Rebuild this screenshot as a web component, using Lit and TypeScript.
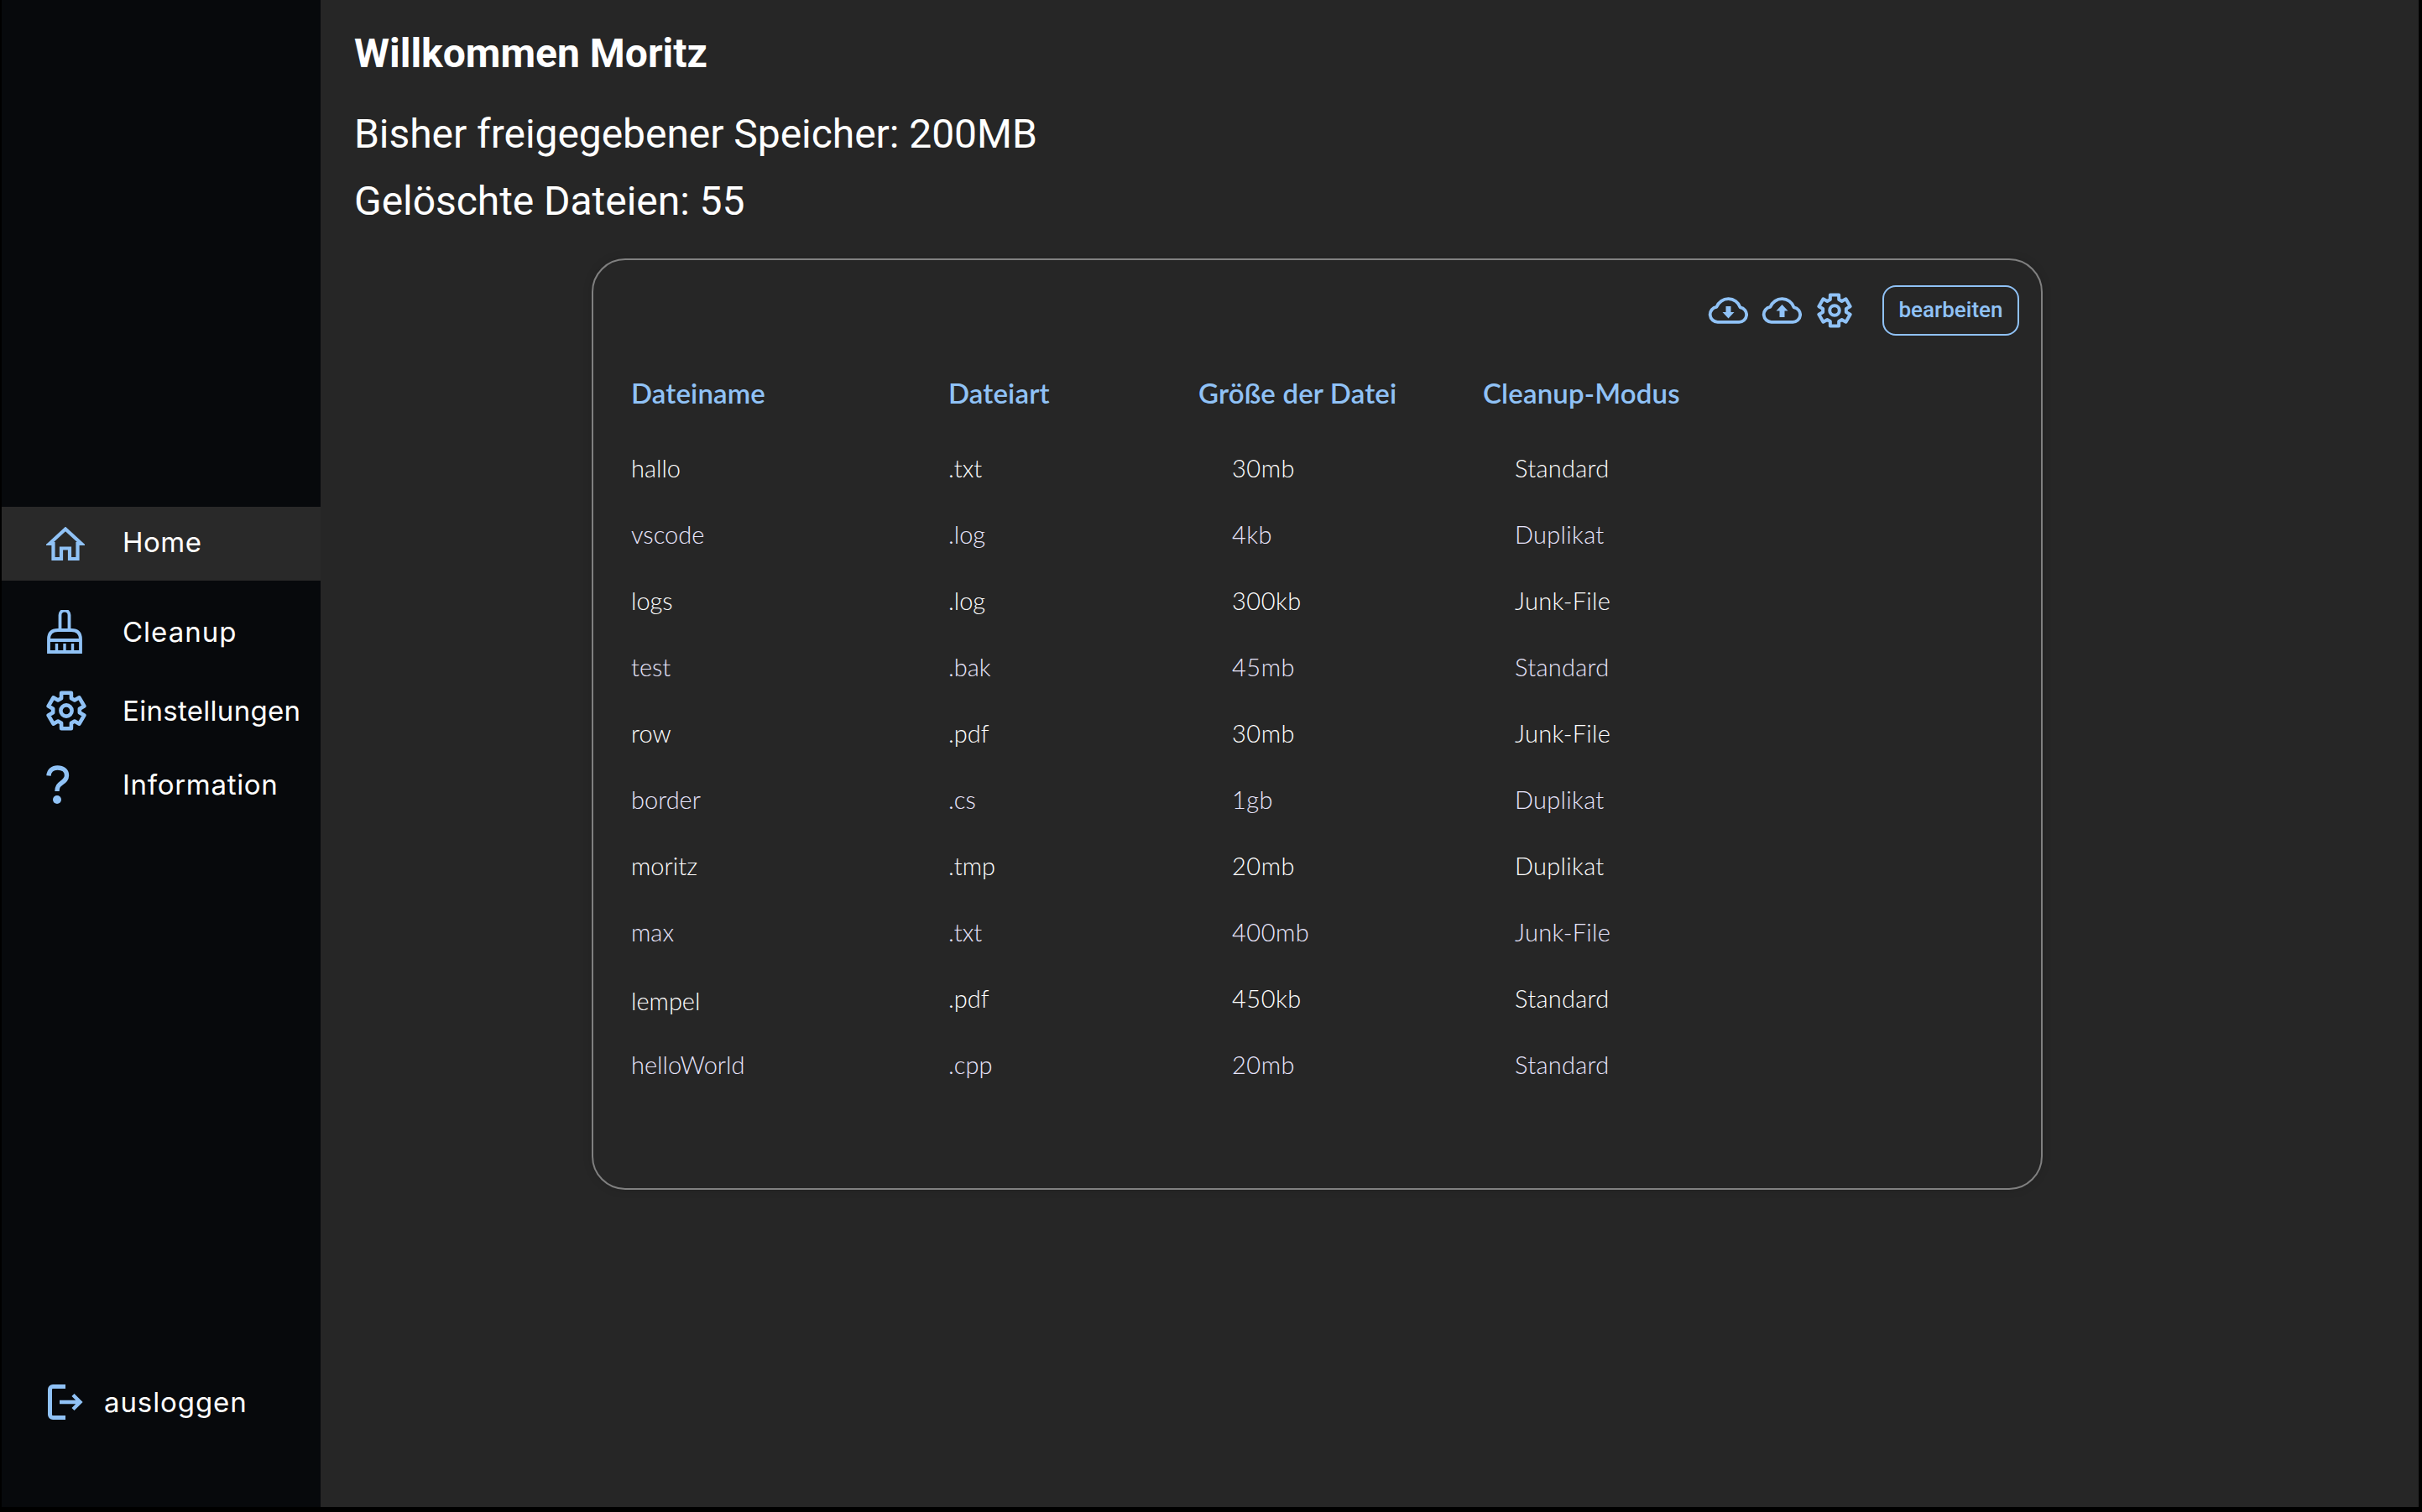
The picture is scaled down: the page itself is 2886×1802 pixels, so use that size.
import { LitElement, html, css, svg } from "lit";
import { customElement } from "lit/decorators.js";

function gearPath(cx: number, cy: number, outer: number, inner: number): string {
  const pts: string[] = [];
  const teeth = 6;
  for (let i = 0; i < teeth; i++) {
    const a = (-90 + (i * 360) / teeth) * (Math.PI / 180);
    const s = 0.27;
    const s2 = 0.38;
    const p = (r: number, t: number) =>
      `${(cx + r * Math.cos(a + t)).toFixed(2)} ${(cy + r * Math.sin(a + t)).toFixed(2)}`;
    pts.push(p(inner, -s2), p(outer, -s), p(outer, s), p(inner, s2));
  }
  return "M" + pts.join(" L") + " Z";
}

const gear = (size: number) => html`<svg class="ic" width=${size} height=${size} viewBox="0 0 48 48">
  <path d=${gearPath(24, 24, 22, 16)} fill="none" stroke="currentColor" stroke-width="4.6" stroke-linejoin="round"></path>
  <circle cx="24" cy="24" r="6.6" fill="none" stroke="currentColor" stroke-width="4.6"></circle>
</svg>`;

const home = html`<svg class="ic" width="46" height="40" viewBox="0 0 46 40">
  <path d="M4 20 L23 2.5 L42 20 H37.5 V38 H28 V25.5 H18 V38 H8.5 V20 Z" fill="none" stroke="currentColor" stroke-width="4.2" stroke-linejoin="miter"></path>
</svg>`;

const broom = html`<svg class="ic broom" width="42" height="52" viewBox="0 0 42 52">
  <path d="M15.5 24 V6 a5.5 5.5 0 0 1 11 0 V24" fill="none" stroke="currentColor" stroke-width="3.8"></path>
  <path d="M2 50 V35 Q2 24 13 24 H29 Q40 24 40 35 V50 Z M2 36 H40" fill="none" stroke="currentColor" stroke-width="3.8"></path>
  <path d="M11.5 40 V50 M21 40 V50 M30.5 40 V50" fill="none" stroke="currentColor" stroke-width="3.4"></path>
</svg>`;

const question = html`<svg class="ic" width="28" height="46" viewBox="0 0 28 46">
  <path d="M3 12.5 C3.5 6 8 3 13.5 3 C20 3 24.5 6.5 24.5 12 C24.5 16.5 22 18.5 18.5 21 C15 23.5 13 25.5 13 31" fill="none" stroke="currentColor" stroke-width="5.4"></path>
  <circle cx="13" cy="41" r="5" fill="currentColor"></circle>
</svg>`;

const logout = html`<svg class="ic" width="42" height="42" viewBox="0 0 42 42">
  <path d="M21 2.5 H6 a3.5 3.5 0 0 0 -3.5 3.5 V36 a3.5 3.5 0 0 0 3.5 3.5 H21" fill="none" stroke="currentColor" stroke-width="5"></path>
  <path d="M14 21 H38 M30 12.5 L38.5 21 L30 29.5" fill="none" stroke="currentColor" stroke-width="4.4"></path>
</svg>`;

const cloudOutline = svg`<path d="M12 29.8 H37 a8.8 8.8 0 0 0 1.6 -17.5 A15 15 0 0 0 10.4 11.9 a9 9 0 0 0 1.6 17.9 Z" fill="none" stroke="currentColor" stroke-width="3.8" stroke-linejoin="round"></path>`;

const cloudDown = html`<svg class="ic" width="48" height="32" viewBox="0 0 48 32">
  ${cloudOutline}
  <path d="M21.5 11 H27.5 V18 H31.5 L24.5 25.5 L17.5 18 H21.5 Z" fill="currentColor"></path>
</svg>`;

const cloudUp = html`<svg class="ic" width="48" height="32" viewBox="0 0 48 32">
  ${cloudOutline}
  <path d="M24.5 9 L31.5 16.5 H27.5 V24 H21.5 V16.5 H17.5 Z" fill="currentColor"></path>
</svg>`;

const rows: [string, string, string, string][] = [
  ["hallo", ".txt", "30mb", "Standard"],
  ["vscode", ".log", "4kb", "Duplikat"],
  ["logs", ".log", "300kb", "Junk-File"],
  ["test", ".bak", "45mb", "Standard"],
  ["row", ".pdf", "30mb", "Junk-File"],
  ["border", ".cs", "1gb", "Duplikat"],
  ["moritz", ".tmp", "20mb", "Duplikat"],
  ["max", ".txt", "400mb", "Junk-File"],
  ["lempel", ".pdf", "450kb", "Standard"],
  ["helloWorld", ".cpp", "20mb", "Standard"],
];

@customElement("app-root")
export class AppRoot extends LitElement {
  static styles = css`
    :host {
      display: block;
      box-sizing: border-box;
      width: 2886px;
      height: 1802px;
      background: #000;
      padding: 0 4px 6px 2px;
    }
    .app {
      display: flex;
      height: 100%;
      background: #262626;
    }
    .side {
      width: 380px;
      flex: none;
      background: #07090c;
      display: flex;
      flex-direction: column;
      padding-top: 604px;
      box-sizing: border-box;
      font-family: "Inter", "Liberation Sans", sans-serif;
      color: #fff;
    }
    .ic {
      display: block;
      flex: none;
      color: #90c2f6;
    }
    .broom { margin-left: 1px; }
    .item {
      display: flex;
      align-items: center;
      font-size: 33px;
      font-weight: 400;
      letter-spacing: 0.5px;
    }
    .slot {
      width: 144px;
      padding-left: 53px;
      box-sizing: border-box;
      flex: none;
    }
    .home { height: 88px; background: #292929; }
    .home .label { position: relative; top: -2px; }
    .cleanup { height: 92px; margin-top: 15px; letter-spacing: 1px; }
    .settings { height: 94px; margin-top: 1px; letter-spacing: 0.3px; }
    .info { height: 86px; margin-top: -2px; letter-spacing: 0.7px; }
    .out {
      margin-top: auto;
      margin-bottom: 104px;
      height: 42px;
      display: flex;
      align-items: center;
      padding-left: 55px;
      gap: 25px;
      font-size: 33px;
      letter-spacing: 0.9px;
    }
    .main {
      flex: 1;
      padding: 34px 0 0 40px;
      font-family: "Roboto", "Liberation Sans", sans-serif;
      color: #fff;
    }
    h1 {
      margin: 0;
      font-size: 48px;
      line-height: 60px;
      font-weight: 700;
    }
    .stat {
      margin: 0;
      font-size: 48px;
      line-height: 80px;
      font-weight: 400;
      letter-spacing: -0.05px;
    }
    .stat.first { margin-top: 26px; }
    .card {
      box-sizing: border-box;
      width: 1729px;
      height: 1110px;
      margin: 28px 0 0 283px;
      border: 2px solid #808080;
      border-radius: 40px;
      padding: 30px 26px 0 45px;
      box-shadow: 0 0 12px rgba(0, 0, 0, 0.12);
    }
    .tools {
      display: flex;
      align-items: center;
      justify-content: flex-end;
      height: 60px;
      color: #90c2f6;
    }
    .tools .c2 { margin-left: 16px; }
    .tools .g { margin-left: 18px; }
    .btn {
      margin-left: 36px;
      box-sizing: border-box;
      width: 163px;
      height: 60px;
      border: 2px solid #90c2f6;
      border-radius: 16px;
      background: none;
      color: #90c2f6;
      font-family: "Roboto", sans-serif;
      font-weight: 500;
      font-size: 26px;
      padding: 0 0 2px;
    }
    .table {
      display: grid;
      grid-template-columns: 378px 298px 339px 1fr;
      grid-auto-rows: 79px;
      margin-top: 39px;
      font-family: "Lato", "Liberation Sans", sans-serif;
      font-size: 29px;
      font-weight: 300;
      align-items: center;
    }
    .head {
      color: #90c2f6;
      font-size: 33px;
      font-weight: 600;
      height: 79px;
      display: flex;
      align-items: center;
      margin-bottom: 21px;
      letter-spacing: 0.15px;
    }
    .row-cells { display: contents; }
    .odd { color: #fff; }
    .even { color: #e8e5fc; }
    .c3 { padding-left: 40px; letter-spacing: 0.5px; }
    .c4 { padding-left: 38px; letter-spacing: 0.3px; }
    .nudge { position: relative; top: 3px; }
  `;

  render() {
    return html`<div class="app">
      <aside class="side">
        <div class="item home"><span class="slot">${home}</span><span class="label">Home</span></div>
        <div class="item cleanup"><span class="slot">${broom}</span>Cleanup</div>
        <div class="item settings"><span class="slot">${gear(48)}</span>Einstellungen</div>
        <div class="item info"><span class="slot">${question}</span>Information</div>
        <div class="out">${logout}<span>ausloggen</span></div>
      </aside>
      <main class="main">
        <h1>Willkommen Moritz</h1>
        <p class="stat first">Bisher freigegebener Speicher: 200MB</p>
        <p class="stat">Gelöschte Dateien: 55</p>
        <section class="card">
          <div class="tools">
            ${cloudDown}
            <span class="c2">${cloudUp}</span>
            <span class="g">${gear(42)}</span>
            <button class="btn">bearbeiten</button>
          </div>
          <div class="table">
            <div class="head">Dateiname</div>
            <div class="head">Dateiart</div>
            <div class="head">Größe der Datei</div>
            <div class="head">Cleanup-Modus</div>
            ${rows.map(
              (r, i) => html`<div class="row-cells ${i % 2 ? "even" : "odd"}">
                <div class=${r[0] === "lempel" ? "nudge" : ""}>${r[0]}</div>
                <div>${r[1]}</div>
                <div class="c3">${r[2]}</div>
                <div class="c4">${r[3]}</div>
              </div>`
            )}
          </div>
        </section>
      </main>
    </div>`;
  }
}
